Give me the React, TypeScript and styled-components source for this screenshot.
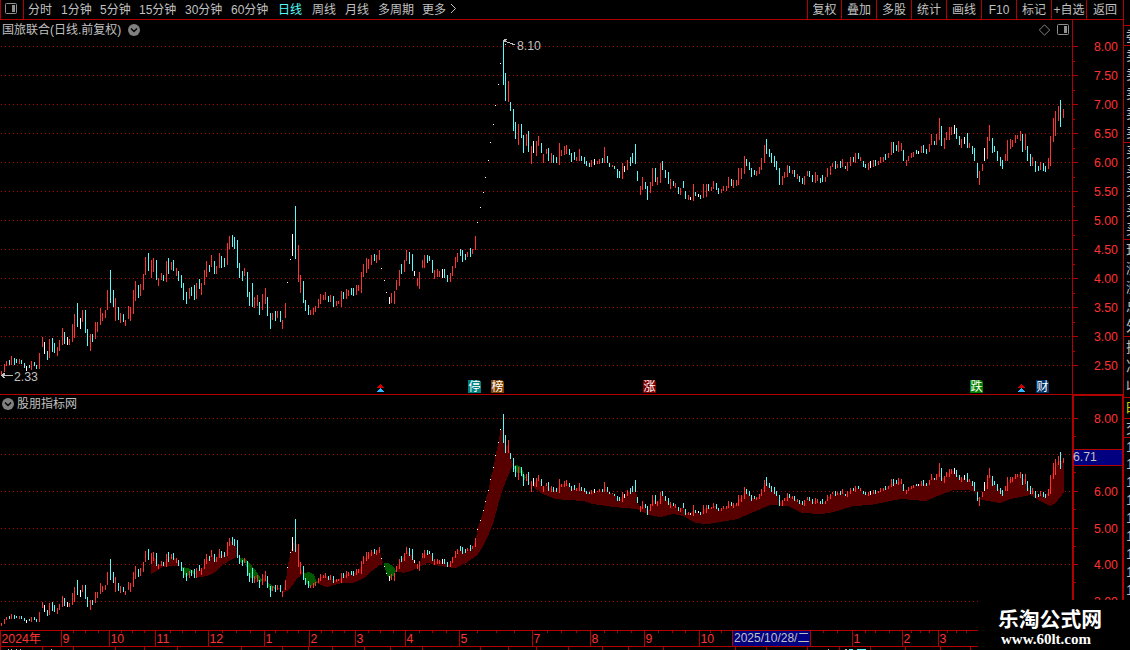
import React from "react";
import styled, { createGlobalStyle } from "styled-components";

const RED = "#b00000";
const LABEL_RED = "#ff3232";
const GREY = "#c0c0c0";

const colors = { r: "#ff3232", c: "#54fcfc", w: "#ffffff" };

// one bar per trading day: x, colour, high-low (in main pane pixels)
const BARS = `
1r371-376 4r364-372 6r361-366 9c360-365 11r356-365 14c358-365 16c359-363 19r359-364 21c360-364 24c363-368
26w366-371 29c365-368 31r361-370 34c362-366 36c365-369 39r353-369 42r337-347 44w342-354 47c351-360 49r339-358
52c338-352 54c343-353 57r347-356 59r340-351 62r328-345 64c332-344 67w337-345 69r339-345 72r324-342 74r314-338
77c303-327 80w318-329 82r310-322 85c310-333 87c329-346 90r334-351 92c334-342 95r322-339 97r322-332 100r308-325
102r313-321 105r310-318 107r290-310 110c270-303 113c290-307 115r298-321 118c307-320 120r313-323 123c314-322
125r320-326 128r306-319 130r307-321 133r290-314 135r281-301 138c285-298 140r284-296 143r274-290 145r257-275
148c253-271 151r260-278 153r258-272 156c260-280 158r278-286 161r273-280 163c275-281 166r261-282 168c258-274
171r262-270 173c260-271 176r268-276 178c271-281 181c275-288 183c283-300 186c292-304 189r288-299 191c287-296
194c285-300 196r283-299 199c279-289 201r283-295 204r270-285 206r261-277 209c265-272 211r255-267 214c261-274
216r266-274 219r253-268 221c256-268 224c258-267 227r243-265 229r236-249 232c235-247 234c237-249 237c240-268
239c263-278 242c271-281 244r268-276 247c272-297 249c292-306 252c283-307 254r297-308 257r295-306 259c302-315
262r294-310 265r288-304 267c297-316 270c313-329 272r313-320 275c311-321 277r311-318 280c311-322 282r320-329
285r303-318 287w282-283 290w259-260 292w234-256 295c206-259 298r245-282 300r275-293 303c281-303 305c300-311
308c305-315 310r310-315 313r308-315 315r306-312 318r299-308 320r294-304 323r295-300 325r292-300 328c296-302
330r295-302 333c296-307 336r301-306 338r301-304 341r291-307 343c292-299 346r289-299 348r290-296 351c288-295
353c288-296 356r285-295 358r285-291 361r272-293 363r264-277 366r258-273 368r259-269 371r255-265 374c254-261
376r255-263 379r250-260 381w268-269 384w280-281 386w292-293 389w297-304 391r293-303 394r291-304 396r280-290
399r270-286 401c264-274 404r260-272 406r250-261 409c252-264 412c254-271 414w271-276 417r278-286 419r272-289
422r260-268 424r255-268 427c255-263 429c256-261 432c260-273 434r270-279 437r269-277 439r271-277 442w269-278
444c269-278 447c275-282 450r273-282 452r266-276 455r257-268 457r253-262 460c249-256 462c250-262 465c254-260
467r252-257 470c248-257 472r249-254 475r236-250 477w222-223 480w207-208 483w192-193 485w177-178 488w160-161
490w142-143 493w124-125 495w105-106 498w84-85 500w63-64 503c40-85 505c73-101 508r81-102 510c102-111
513c109-131 515c122-139 518r124-145 521c124-138 523c135-153 526r134-146 528c131-152 531r146-164 533w141-153
536r141-156 538r136-146 541c143-153 543r154-163 546r149-154 548c148-161 551r153-163 553c155-163 556c157-163
559r143-165 561r150-156 564r146-155 566r145-154 569c149-155 571c153-162 574c152-160 576r157-161 579r149-161
581c156-161 584c157-164 586c161-166 589c163-167 591r160-167 594w159-165 597r161-164 599r159-164 602c158-163
604r147-163 607c156-163 609c163-167 612r165-167 614c166-169 617c169-178 619c171-178 622r163-179 624w166-172
627r160-170 630c157-166 632c153-163 635c144-164 637c171-181 640r186-195 642r177-190 645c182-189 647c186-200
650r182-193 652r168-186 655c168-182 657r177-185 660r163-183 662c161-170 665c170-178 668c172-184 670r179-189
673c181-186 675r183-188 678c187-194 680r188-195 683c181-188 685c191-199 688r195-200 690w197-200 693r184-201
695c192-196 698w194-197 700c195-199 703r184-198 706r184-197 708c184-191 711r187-191 713r181-189 716c183-190
718c188-194 721r189-193 723r186-191 726r186-191 728r177-188 731c179-186 733r180-188 736r180-186 738r168-185
741r168-179 744r156-174 746c159-166 749c162-170 751c168-177 754c170-175 756r171-176 759r167-174 761r158-170
764r145-163 766c139-154 769c149-157 771c153-163 774c156-167 776c161-170 779c168-185 782r176-185 784r172-178
787r165-177 789c166-173 792r170-174 794c170-177 797r174-179 799c176-182 802c178-184 804r176-185 807r171-176
809c171-177 812c175-182 815r172-183 817r175-181 820c178-183 822c175-182 825r177-182 827r168-177 830r166-175
832r163-167 835c161-169 837r164-168 840c161-168 842r159-167 845c166-169 847r162-171 850r157-166 853c157-162
855r153-163 858c153-159 860r157-161 863c161-167 865c164-168 868r163-170 870w161-168 873r160-167 875c160-166
878r161-165 880r157-163 883r157-162 885c154-160 888r153-158 891r142-155 893c142-153 896c145-151 898r141-152
901r143-151 903c150-161 906r160-166 908r156-161 911r153-158 913r152-157 916c150-154 918w151-154 921r146-153
923c145-153 926c149-154 929r144-152 931r134-145 934c141-145 936r134-145 939r118-140 941c126-146 944r138-149
946r132-140 949r127-140 951r127-135 954w125-134 956c128-139 959c136-145 961r139-148 964w137-144 967c133-148
969r143-148 972c146-154 974c148-161 977c163-178 979r171-185 982r164-171 984w148-161 987r137-159 989r125-141
992c138-153 994c146-152 997c151-161 1000c157-166 1002c160-169 1005r154-161 1007r140-161 1010r139-149
1012r140-147 1015r135-143 1017r135-139 1020r131-141 1022c134-152 1025r134-150 1027c146-161 1030c154-166
1032r157-166 1035c161-172 1038c166-171 1040r162-170 1043c163-171 1045c166-172 1048r158-169 1050r136-166
1053r118-142 1055r111-136 1058r106-121 1060c100-127 1063r109-118`;

const bars = BARS.trim()
  .split(/\s+/)
  .map((item) => {
    const [, x, kind, high, low] = item.match(/(\d+)([rcw])(\d+)-(\d+)/);
    return { x: +x, kind, high: +high, low: +low };
  });

// moving average in the indicator pane
const AVERAGE = [
  [151, 574], [156, 571], [160, 568], [166, 566], [178, 566], [187, 568],
  [192, 570], [197, 577], [201, 577], [210, 575], [216, 571], [222, 565],
  [230, 560], [237, 557], [245, 559], [250, 564], [257, 573], [262, 581],
  [268, 583], [274, 587], [280, 590], [284, 592], [288, 590], [292, 585],
  [296, 579], [302, 574], [308, 572], [313, 574], [317, 583], [322, 586],
  [327, 587], [333, 585], [342, 583], [352, 583], [358, 581], [365, 577],
  [370, 572], [377, 567], [382, 563], [388, 563], [393, 567], [396, 571],
  [403, 573], [410, 571], [416, 568], [427, 563], [440, 566], [447, 567],
  [455, 568], [467, 562], [477, 555], [482, 547], [488, 535], [493, 522],
  [498, 503], [502, 490], [507, 477], [512, 466], [517, 465], [521, 467],
  [525, 477], [529, 484], [533, 487], [540, 493], [555, 499], [583, 501],
  [592, 504], [613, 507], [637, 509], [648, 515], [660, 517], [673, 514],
  [683, 516], [695, 523], [707, 524], [720, 522], [737, 519], [753, 512],
  [770, 505], [787, 506], [802, 513], [822, 514], [833, 512], [853, 506],
  [870, 505], [900, 499], [925, 501], [937, 496], [953, 490], [968, 490],
  [974, 492], [977, 497], [981, 500], [1000, 503], [1010, 499], [1030, 495],
  [1043, 503], [1050, 506], [1055, 503], [1063, 493],
];

const toIndicator = (y) => Math.round(418 + (y - 46) * 0.631);

const closes = bars.map(({ x, kind, high, low }) => {
  const part = kind === "r" ? 0.4 : 0.6;
  return [x, toIndicator(high + (low - high) * part)];
});

function valueAt(points, x) {
  const next = points.findIndex((p) => p[0] >= x);
  if (next <= 0) {
    return points[next === 0 ? 0 : points.length - 1][1];
  }
  const [x0, y0] = points[next - 1];
  const [x1, y1] = points[next];
  return Math.round(y0 + ((y1 - y0) * (x - x0)) / (x1 - x0));
}

function bandPath(above) {
  let d = "";
  for (let x = 151; x <= 1063; x++) {
    const close = valueAt(closes, x);
    const average = valueAt(AVERAGE, x);
    if (close !== average && close < average === above) {
      d += `M${x + 0.5} ${close}V${average}`;
    }
  }
  return d;
}

const mainLevels = [8, 7.5, 7, 6.5, 6, 5.5, 5, 4.5, 4, 3.5, 3, 2.5].map(
  (value, i) => ({ label: value.toFixed(2), y: 46 + i * 29 })
);
const indicatorLevels = [
  { label: "8.00", y: 418 },
  { label: "", y: 454 },
  { label: "6.00", y: 491 },
  { label: "5.00", y: 528 },
  { label: "4.00", y: 564 },
  { label: "3.00", y: 601 },
];

const periods = [
  { label: "分时", width: 33 },
  { label: "1分钟", width: 39 },
  { label: "5分钟", width: 39 },
  { label: "15分钟", width: 46 },
  { label: "30分钟", width: 46 },
  { label: "60分钟", width: 47 },
  { label: "日线", width: 34, active: true },
  { label: "周线", width: 33 },
  { label: "月线", width: 33 },
  { label: "多周期", width: 44 },
  { label: "更多", width: 27 },
];

const tools = [
  { label: "复权", width: 34 },
  { label: "叠加", width: 35 },
  { label: "多股", width: 35 },
  { label: "统计", width: 35 },
  { label: "画线", width: 35 },
  { label: "F10", width: 35 },
  { label: "标记", width: 35 },
  { label: "+自选", width: 35 },
  { label: "返回", width: 37 },
];

const months = [
  { x: 0, label: "2024年" },
  { x: 61, label: "9" },
  { x: 109, label: "10" },
  { x: 155, label: "11" },
  { x: 208, label: "12" },
  { x: 264, label: "1" },
  { x: 309, label: "2" },
  { x: 355, label: "3" },
  { x: 405, label: "4" },
  { x: 459, label: "5" },
  { x: 532, label: "7" },
  { x: 590, label: "8" },
  { x: 644, label: "9" },
  { x: 699, label: "10" },
  { x: 732, label: "" },
  { x: 810, label: "" },
  { x: 852, label: "1" },
  { x: 902, label: "2" },
  { x: 938, label: "3" },
];

const weekTicks = [
  73, 85, 98, 121, 132, 144, 170, 182, 195, 222, 236, 250, 275, 287, 298, 321,
  332, 344, 368, 380, 393, 419, 432, 446, 477, 496, 514, 547, 561, 576, 604,
  617, 631, 658, 672, 685, 710, 721, 823, 837, 865, 875, 889, 911, 920, 929,
  947, 956, 966,
];
const footTicks = [
  0, 42, 73, 115, 144, 177, 241, 282, 308, 332, 364, 390, 422, 480, 508, 536,
  568, 602, 628, 663, 735, 766, 807, 839, 870, 905, 940, 970,
];

const events = [
  { x: 468, label: "停", fill: "#008080" },
  { x: 491, label: "榜", fill: "#804000" },
  { x: 643, label: "涨", fill: "#800000" },
  { x: 970, label: "跌", fill: "#008000" },
  { x: 1036, label: "财", fill: "#003468" },
];

const quoteRows = [
  { label: "委", height: 20, top: 25, line: true },
  { label: "卖", height: 19, line: true },
  { label: "卖", height: 20 },
  { label: "卖", height: 19 },
  { label: "卖", height: 20 },
  { label: "卖", height: 19 },
  { label: "买", height: 19, line: true },
  { label: "买", height: 20 },
  { label: "买", height: 19 },
  { label: "买", height: 20 },
  { label: "买", height: 19 },
  { label: "现", height: 20, line: true },
  { label: "涨", height: 19 },
  { label: "涨", height: 19 },
  { label: "总", height: 19 },
  { label: "外", height: 20 },
  { label: "换", height: 20, line: true },
  { label: "净", height: 20 },
  { label: "收", height: 21 },
  { label: "时", height: 21, line: true, color: "#d0d000" },
  { label: "交", height: 19, line: true },
  { label: "1", height: 18, line: true },
  ...Array.from({ length: 8 }, () => ({ label: "1", height: 18 })),
];

const GlobalStyle = createGlobalStyle`
  body {
    margin: 0;
    background: #000;
    overflow: hidden;
  }
`;

const Window = styled.div`
  position: relative;
  display: flex;
  width: 1130px;
  height: 650px;
  overflow: hidden;
  background: #000;
  color: ${GREY};
  font-family: "Liberation Sans", "Noto Sans CJK SC", sans-serif;
  font-size: 12px;
  line-height: 18px;
  white-space: nowrap;

  svg {
    display: block;
    flex: none;
  }
`;

const Workspace = styled.div`
  display: flex;
  flex-direction: column;
  width: 1123px;
  flex: none;
`;

const Toolbar = styled.div`
  display: flex;
  height: 19px;
  border-bottom: 1px solid ${RED};
  line-height: 20px;
`;

const LayoutButton = styled.div`
  box-sizing: border-box;
  width: 24px;
  padding: 3px 0 0 4px;
  margin-right: 4px;
  border-left: 1px solid ${RED};
  border-right: 1px solid ${RED};
`;

const Period = styled.div<{ $width: number; $active?: boolean }>`
  width: ${(p) => p.$width}px;
  color: ${(p) => (p.$active ? "#54fcfc" : GREY)};
`;

const Tools = styled.div`
  display: flex;
  margin-left: auto;
`;

const Tool = styled.div<{ $width: number }>`
  box-sizing: border-box;
  display: flex;
  justify-content: center;
  width: ${(p) => p.$width}px;
  border-left: 1px solid ${RED};
`;

const Pane = styled.div<{ $height: number }>`
  position: relative;
  display: flex;
  height: ${(p) => p.$height}px;
`;

const PaneTitle = styled.div<{ $gap: number }>`
  position: absolute;
  top: 1px;
  left: 2px;
  right: 54px;
  display: flex;
  align-items: center;
  gap: ${(p) => p.$gap}px;
`;

const PaneControls = styled.div`
  display: flex;
  gap: 6px;
  margin-left: auto;
`;

const QuoteStrip = styled.div`
  box-sizing: border-box;
  width: 7px;
  height: 600px;
  overflow: hidden;
  border-left: 1px solid ${RED};
`;

const QuoteRow = styled.div<{
  $height: number;
  $top?: number;
  $line?: boolean;
  $color?: string;
}>`
  box-sizing: border-box;
  height: ${(p) => p.$height}px;
  margin-top: ${(p) => p.$top || 0}px;
  padding-left: 2px;
  border-top: ${(p) => (p.$line ? `1px solid ${RED}` : "none")};
  color: ${(p) => p.$color || GREY};
  font-size: 14px;
  line-height: ${(p) => p.$height}px;
`;

const Watermark = styled.div`
  position: absolute;
  right: 0;
  bottom: 0;
  box-sizing: border-box;
  width: 152px;
  height: 50px;
  padding: 6px 0 0 20px;
  background: #000;
  color: #fff;
`;

const WatermarkName = styled.div`
  font: bold 20.8px/24px "Noto Sans CJK SC", sans-serif;
`;

const WatermarkUrl = styled.div`
  padding: 1px 0 0 3px;
  font: bold 15px/16px "Liberation Serif", serif;
`;

const Chevron = () => (
  <svg width="12" height="12" viewBox="0 0 12 12">
    <circle cx="6" cy="6" r="6" fill="#808080" />
    <path d="M3 4.5L6 7.5L9 4.5" fill="none" stroke="#000" strokeWidth="1.4" />
  </svg>
);

const SplitIcon = () => (
  <svg width="12" height="12" viewBox="0 0 12 12">
    <rect x="0.5" y="0.5" width="11" height="10" rx="1" fill="none" stroke="#909090" />
    <rect x="7" y="2" width="3" height="7" fill="#909090" />
  </svg>
);

const Grid = ({ levels }) => (
  <path
    d={levels.map(({ y }) => `M1 ${y + 0.5}H1071`).join("")}
    stroke={RED}
    strokeDasharray="1 3"
  />
);

const Candles = ({ project = (y) => y }) => (
  <>
    {bars.map(({ x, kind, high, low }) => (
      <rect
        key={x}
        x={x}
        y={project(high)}
        width="1"
        height={Math.max(1, project(low) - project(high))}
        fill={colors[kind]}
      />
    ))}
  </>
);

const EventBadge = ({ x, label, fill }) => (
  <g>
    <path d={`M${x} 380h11l2 2v11h-13z`} fill={fill} />
    <text x={x + 0.5} y="391" fill="#fff" fontSize="12">
      {label}
    </text>
  </g>
);

const Arrows = ({ x }) => (
  <g shapeRendering="crispEdges">
    <path
      d={`M${x + 3} 384.5h1M${x + 2} 385.5h3M${x + 1} 386.5h5M${x} 387.5h7`}
      stroke="#d00000"
    />
    <path
      d={`M${x + 3} 388.5h1M${x + 2} 389.5h3M${x + 1} 390.5h5M${x} 391.5h7`}
      stroke="#30b4ff"
    />
  </g>
);

const AxisLabels = ({ levels }) => (
  <>
    {levels.map(({ label, y }) => (
      <text key={y} x="1094" y={y + 5} fill={LABEL_RED} fontSize="12.3">
        {label}
      </text>
    ))}
  </>
);

const MainChart = () => (
  <Pane $height={374}>
    <svg width="1072" height="374" viewBox="0 20 1072 374">
      <g shapeRendering="crispEdges">
        <Grid levels={mainLevels} />
        <Candles />
        <path
          d="M1 375.5h12M2 374.5h3M3 373.5h2M2 376.5h2M3 377.5h2M503 40.5h3M504 39.5h3M503 41.5h4M507 42.5h3M510 43.5h3M512 44.5h3M505 44.5h1"
          stroke={GREY}
        />
      </g>
      <text x="14" y="381" fill={GREY} fontSize="12.3">
        2.33
      </text>
      <text x="517" y="50" fill={GREY} fontSize="12.3">
        8.10
      </text>
      {events.map((event) => (
        <EventBadge key={event.x} {...event} />
      ))}
      <Arrows x={377} />
      <Arrows x={1018} />
    </svg>
    <svg width="51" height="374" viewBox="1072 20 51 374">
      <path
        shapeRendering="crispEdges"
        d={
          "M1072.5 20V394" +
          mainLevels.map(({ y }) => `M1073 ${y + 0.5}h5`).join("") +
          mainLevels.slice(0, -1).map(({ y }) => `M1073 ${y + 15.5}h2`).join("")
        }
        stroke={RED}
      />
      <AxisLabels levels={mainLevels} />
    </svg>
    <PaneTitle $gap={7}>
      国旅联合(日线.前复权)
      <Chevron />
      <PaneControls>
        <svg width="12" height="12" viewBox="0 0 12 12">
          <path d="M5.5 0.8L10.7 6L5.5 11.2L0.3 6Z" fill="none" stroke="#808080" />
        </svg>
        <SplitIcon />
      </PaneControls>
    </PaneTitle>
  </Pane>
);

const IndicatorChart = () => (
  <Pane $height={236}>
    <svg width="1072" height="236" viewBox="0 394 1072 236">
      <g shapeRendering="crispEdges">
        <path d="M0 394.5H1072" stroke={RED} />
        <Grid levels={indicatorLevels} />
        <path d={bandPath(true)} stroke="#580000" />
        <path d={bandPath(false)} stroke="#005800" />
        <Candles project={toIndicator} />
      </g>
    </svg>
    <svg width="51" height="236" viewBox="1072 394 51 236">
      <g shapeRendering="crispEdges">
        <path d="M1073 630V395H1123" fill="none" stroke={RED} strokeWidth="2" />
        <path d="M1122.5 394V630" stroke={RED} />
        <path
          d={
            indicatorLevels.map(({ y }) => `M1074 ${y + 0.5}h4`).join("") +
            indicatorLevels.map(({ y }) => `M1074 ${y + 18.5}h2`).join("")
          }
          stroke={RED}
        />
        <rect x="1074" y="449" width="48" height="17" fill={RED} />
        <rect x="1074" y="450" width="48" height="15" fill="#000080" />
      </g>
      <AxisLabels levels={indicatorLevels} />
      <text x="1073" y="461" fill={GREY} fontSize="12.3">
        6.71
      </text>
    </svg>
    <PaneTitle $gap={3}>
      <Chevron />
      股朋指标网
    </PaneTitle>
  </Pane>
);

const TimeAxis = () => (
  <svg width="1123" height="20" viewBox="0 630 1123 20">
    <g shapeRendering="crispEdges">
      <path
        d={
          "M0 630.5H1123M0 646.5H1123" +
          months.map(({ x }) => `M${x + 0.5} 631V646`).join("") +
          weekTicks.map((x) => `M${x + 0.5} 631v2`).join("") +
          footTicks.map((x) => `M${x + 0.5} 647v3`).join("")
        }
        stroke={RED}
      />
      <path d="M8 649.5h1m2 0h1m4 0h1m3 0h1m30 0h1M828 649.5h1m16 0h2" stroke={GREY} />
      <path d="M849 649.5h4m4 0h9" stroke="#54fcfc" />
      <rect x="733" y="631" width="77" height="15" fill="#000080" />
    </g>
    {months.map(({ x, label }) => (
      <text key={x} x={x + 1.5} y="643" fill={LABEL_RED} fontSize="12.3">
        {label}
      </text>
    ))}
    <text x="734" y="642" fill={GREY} fontSize="12">
      2025/10/28/二
    </text>
  </svg>
);

export default function App() {
  return (
    <>
      <GlobalStyle />
      <Window>
        <Workspace>
          <Toolbar>
            <LayoutButton>
              <SplitIcon />
            </LayoutButton>
            {periods.map(({ label, width, active }) => (
              <Period key={label} $width={width} $active={active}>
                {label}
              </Period>
            ))}
            <svg width="8" height="18" viewBox="0 0 8 18">
              <path d="M2 4L6.5 8.5L2 13" fill="none" stroke={GREY} />
            </svg>
            <Tools>
              {tools.map(({ label, width }) => (
                <Tool key={label} $width={width}>
                  {label}
                </Tool>
              ))}
            </Tools>
          </Toolbar>
          <MainChart />
          <IndicatorChart />
          <TimeAxis />
        </Workspace>
        <QuoteStrip>
          {quoteRows.map(({ label, height, top, line, color }, i) => (
            <QuoteRow key={i} $height={height} $top={top} $line={line} $color={color}>
              {label}
            </QuoteRow>
          ))}
        </QuoteStrip>
        <Watermark>
          <WatermarkName>乐淘公式网</WatermarkName>
          <WatermarkUrl>www.60lt.com</WatermarkUrl>
        </Watermark>
      </Window>
    </>
  );
}
